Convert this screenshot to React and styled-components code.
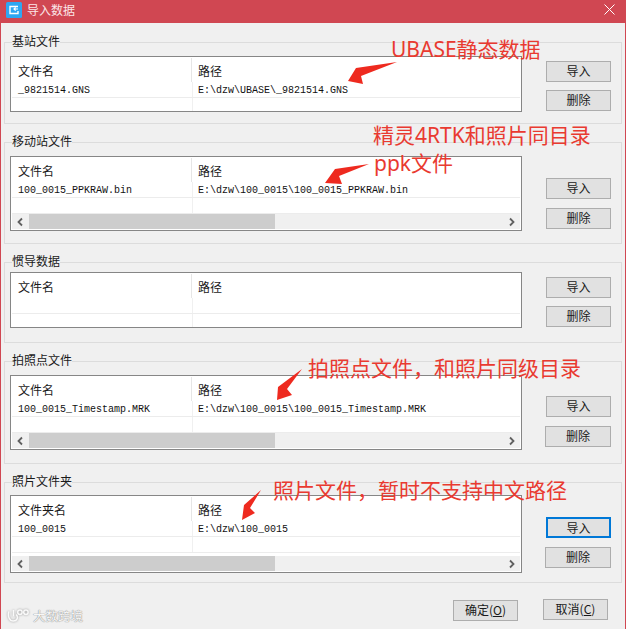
import React from 'react'
import styled, { createGlobalStyle } from 'styled-components'

const GlobalStyle = createGlobalStyle`
  html, body {
    margin: 0;
    padding: 0;
    background: #fff;
    overflow: hidden;
  }
`

const CJK = `"Noto Sans CJK SC", "Liberation Sans", sans-serif`

const groups = [
  {
    title: '基站文件',
    name: '文件名',
    file: '_9821514.GNS',
    path: 'E:\\dzw\\UBASE\\_9821514.GNS',
    listHeight: 56,
    top: 7,
    scroll: false,
    pad: 5,
    gap: 8,
    height: 89,
  },
  {
    title: '移动站文件',
    name: '文件名',
    file: '100_0015_PPKRAW.bin',
    path: 'E:\\dzw\\100_0015\\100_0015_PPKRAW.bin',
    listHeight: 75,
    top: 7,
    scroll: true,
    pad: 22,
    gap: 9,
    height: 109,
  },
  {
    title: '惯导数据',
    name: '文件名',
    file: '',
    path: '',
    listHeight: 56,
    top: 3,
    scroll: false,
    pad: 5,
    gap: 8,
    height: 88,
  },
  {
    title: '拍照点文件',
    name: '文件名',
    file: '100_0015_Timestamp.MRK',
    path: 'E:\\dzw\\100_0015\\100_0015_Timestamp.MRK',
    listHeight: 75,
    top: 7,
    scroll: true,
    pad: 21,
    gap: 9,
    height: 110,
    wide: true,
  },
  {
    title: '照片文件夹',
    name: '文件夹名',
    file: '100_0015',
    path: 'E:\\dzw\\100_0015',
    listHeight: 78,
    top: 6,
    scroll: true,
    pad: 22,
    gap: 9,
    height: 108,
    wide: true,
    focused: true,
  },
]

const notes = [
  { text: 'UBASE静态数据', x: 391, y: 34 },
  { text: '精灵4RTK和照片同目录', x: 373, y: 120 },
  { text: 'ppk文件', x: 374, y: 148 },
  { text: '拍照点文件，和照片同级目录', x: 308, y: 353 },
  { text: '照片文件，暂时不支持中文路径', x: 273, y: 475 },
]

const arrows = [
  '397,62 356,68 348,81 363,84 361,76',
  '369,164 335,169 325,183 342,184 339,176',
  '302,369 278,387 277,400 292,395 287,389',
  '261,490 244,505 242,520 255,513 250,508',
]

function Group({ group }) {
  return (
    <Fieldset $height={group.height}>
      <Legend>{group.title}</Legend>
      <GroupBody $top={group.top}>
        <List $height={group.listHeight}>
          <HeaderRow>
            <HeaderCell $first>{group.name}</HeaderCell>
            <HeaderCell>路径</HeaderCell>
          </HeaderRow>
          <DataRow>
            <DataCell $first>{group.file}</DataCell>
            <DataCell>{group.path}</DataCell>
          </DataRow>
          <DataRow>
            <DataCell $first />
            <DataCell />
          </DataRow>
          {group.scroll && (
            <Scrollbar>
              <ScrollArrow viewBox="0 0 10 10">
                <path d="M6.5 1.5 L3 5 L6.5 8.5" />
              </ScrollArrow>
              <ScrollThumb />
              <ScrollArrow viewBox="0 0 10 10">
                <path d="M3.5 1.5 L7 5 L3.5 8.5" />
              </ScrollArrow>
            </Scrollbar>
          )}
        </List>
        <ButtonColumn $pad={group.pad} $gap={group.gap}>
          <Button $focused={group.focused}>导入</Button>
          <Button $wide={group.wide}>删除</Button>
        </ButtonColumn>
      </GroupBody>
    </Fieldset>
  )
}

export default function App() {
  return (
    <Page>
      <GlobalStyle />
      <Window>
        <TitleBar>
          <TitleIcon viewBox="0 0 16 16">
            <rect width="16" height="16" rx="1.5" fill="#2ea6f2" />
            <path d="M12 4.5 H4 V11.5 H12 V9" fill="none" stroke="#fff" strokeWidth="1.4" />
            <path d="M12 7 H8 M9.6 5.4 L8 7 L9.6 8.6" fill="none" stroke="#fff" strokeWidth="1.2" />
          </TitleIcon>
          <TitleText>导入数据</TitleText>
          <CloseIcon viewBox="0 0 11 11">
            <path d="M0.5 0.5 L10.5 10.5 M10.5 0.5 L0.5 10.5" />
          </CloseIcon>
        </TitleBar>
        <Content>
          {groups.map((g) => (
            <Group key={g.title} group={g} />
          ))}
          <Footer>
            <Button>确定(<u>O</u>)</Button>
            <CancelButton>取消(<u>C</u>)</CancelButton>
          </Footer>
        </Content>
        <Watermark>
          <WatermarkLogo viewBox="0 0 26 15">
            <path d="M2 3 C0.5 8 2.5 13.5 7 13.5 C11 13.5 12.5 9.5 10 6.5 M7 1.5 V8.5" />
            <circle cx="14" cy="4" r="2.4" />
            <circle cx="20.5" cy="4" r="2.4" />
          </WatermarkLogo>
          <WatermarkText>大数跨境</WatermarkText>
        </Watermark>
      </Window>
      {notes.map((n) => (
        <Note key={n.text} $x={n.x} $y={n.y}>{n.text}</Note>
      ))}
      <ArrowLayer viewBox="0 0 629 629">
        {arrows.map((p) => (
          <polygon key={p} points={p} />
        ))}
      </ArrowLayer>
    </Page>
  )
}

const Page = styled.div`
  position: relative;
  width: 629px;
  height: 629px;
  overflow: hidden;
  background: #fff;
`

const Window = styled.div`
  position: relative;
  width: 626px;
  height: 629px;
  box-sizing: border-box;
  background: #f0f0f0;
  border-left: 1px solid #d04752;
  border-right: 1px solid #d04752;
  font-family: ${CJK};
  color: #1a1a1a;
`

const TitleBar = styled.div`
  display: flex;
  align-items: center;
  height: 23px;
  padding: 0 10px 4px 5px;
  box-sizing: border-box;
  background: #d04752;
`

const TitleIcon = styled.svg`
  width: 16px;
  height: 16px;
  margin-right: 5px;
`

const TitleText = styled.span`
  flex: 1;
  font-size: 12px;
  color: #fbe6e8;
`

const CloseIcon = styled.svg`
  width: 11px;
  height: 11px;
  stroke: #fff;
  fill: none;
  stroke-width: 1;
`

const Content = styled.div`
  display: flex;
  flex-direction: column;
  gap: 11px;
  padding: 12px 3px 0 3px;
`

const Fieldset = styled.fieldset`
  height: ${(p) => p.$height}px;
  margin: 0;
  padding: 0 10px 0 5px;
  box-sizing: border-box;
  border: 1px solid #dcdcdc;
  min-width: 0;
`

const Legend = styled.legend`
  margin-left: 2px;
  padding: 0;
  font-size: 12px;
  line-height: 12px;
  height: 14px;
`

const GroupBody = styled.div`
  display: flex;
  justify-content: space-between;
  padding-top: ${(p) => p.$top}px;
`

const List = styled.div`
  display: flex;
  flex-direction: column;
  width: 512px;
  height: ${(p) => p.$height}px;
  box-sizing: border-box;
  padding: 1px;
  background: #fff;
  border: 1px solid #868686;
  overflow: hidden;
`

const HeaderRow = styled.div`
  display: flex;
  height: 24px;
  flex-shrink: 0;
  font-size: 12px;
  line-height: 25px;
`

const HeaderCell = styled.div`
  width: ${(p) => (p.$first ? '180px' : 'auto')};
  flex: ${(p) => (p.$first ? 'none' : 1)};
  padding-left: 6px;
  box-sizing: border-box;
  border-right: ${(p) => (p.$first ? '1px solid #e6e6e6' : 'none')};
`

const DataRow = styled.div`
  display: flex;
  height: 16px;
  flex-shrink: 0;
  box-sizing: border-box;
  border-bottom: 1px solid #ececec;
  font-family: "Liberation Mono", monospace;
  font-size: 10px;
  line-height: 18px;
  color: #111;
`

const DataCell = styled.div`
  width: ${(p) => (p.$first ? '181px' : 'auto')};
  flex: ${(p) => (p.$first ? 'none' : 1)};
  padding-left: ${(p) => (p.$first ? '6px' : '5px')};
  box-sizing: border-box;
  border-right: ${(p) => (p.$first ? '1px solid #f0f0f0' : 'none')};
  white-space: pre;
`

const Scrollbar = styled.div`
  display: flex;
  align-items: center;
  height: 15px;
  margin-top: auto;
  flex-shrink: 0;
  background: #f0f0f0;
`

const ScrollArrow = styled.svg`
  width: 17px;
  height: 10px;
  flex-shrink: 0;
  fill: none;
  stroke: #606060;
  stroke-width: 1.8;
`

const ScrollThumb = styled.div`
  width: 246px;
  height: 15px;
  background: #cdcdcd;
  margin-right: auto;
`

const ButtonColumn = styled.div`
  display: flex;
  flex-direction: column;
  align-items: flex-end;
  gap: ${(p) => p.$gap}px;
  padding-top: ${(p) => p.$pad}px;
`

const Button = styled.button`
  width: ${(p) => (p.$wide ? 66 : 65)}px;
  height: 21px;
  padding: 0 0 1px;
  box-sizing: border-box;
  background: #e1e1e1;
  border: ${(p) => (p.$focused ? '2px solid #0078d7' : '1px solid #adadad')};
  font-family: ${CJK};
  font-size: 12px;
  line-height: 18px;
  color: #1a1a1a;
`

const CancelButton = styled(Button)`
  margin-top: -1px;
`

const Footer = styled.div`
  display: flex;
  justify-content: flex-end;
  align-items: flex-start;
  gap: 25px;
  padding: 6px 14px 0 0;
`

const Watermark = styled.div`
  position: absolute;
  left: 6px;
  bottom: 6px;
  display: flex;
  align-items: center;
  gap: 2px;
`

const WatermarkLogo = styled.svg`
  width: 24px;
  height: 15px;
  fill: none;
  stroke: #fafafa;
  stroke-width: 1.6;
  filter: drop-shadow(0 0 1px #9a9a9a);
`

const WatermarkText = styled.span`
  font-size: 12.5px;
  line-height: 15px;
  color: #f7f7f7;
  text-shadow: 0 0 1px #8a8a8a, 0 0 1px #8a8a8a;
`

const Note = styled.div`
  position: absolute;
  left: ${(p) => p.$x}px;
  top: ${(p) => p.$y}px;
  font-family: "Noto Sans", "Noto Sans CJK SC", sans-serif;
  font-size: 21px;
  line-height: 30px;
  white-space: nowrap;
  color: #e93a30;
`

const ArrowLayer = styled.svg`
  position: absolute;
  left: 0;
  top: 0;
  width: 629px;
  height: 629px;
  fill: #ee2a1f;
  pointer-events: none;
`
